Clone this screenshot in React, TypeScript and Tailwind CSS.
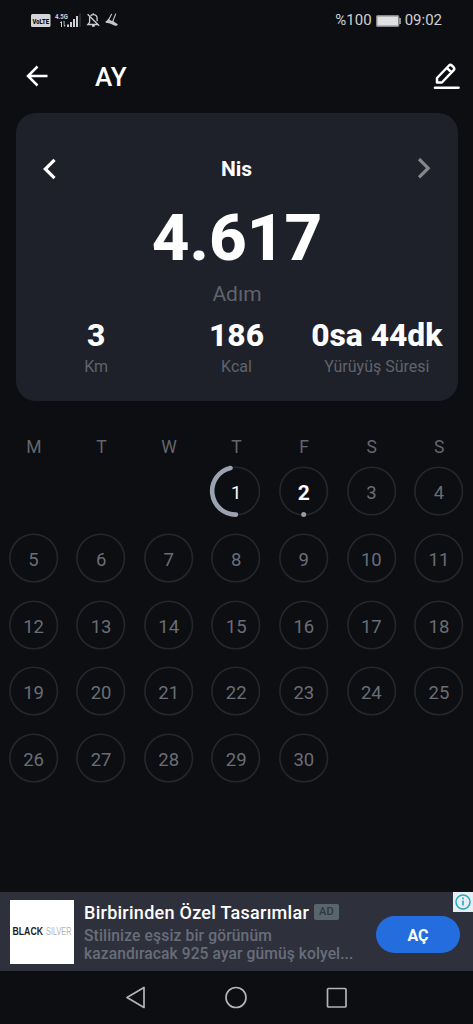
import React from "react";

const days = ["M", "T", "W", "T", "F", "S", "S"];

function StatusBar() {
  return (
    <div className="flex h-10 items-center justify-between pr-[31px] pl-[31px] text-[#d0d1d4]">
      <div className="flex items-center">
        <svg width="20" height="13" viewBox="0 0 20 13" overflow="visible">
          <rect width="19.500" height="13" rx="1.500" fill="#d4d5d8" />
          <text x="1.500" y="9.500" fontSize="8" fontWeight="900" fill="#0d0e12" textLength="16.500" lengthAdjust="spacingAndGlyphs">
            VoLTE
          </text>
        </svg>
        <svg className="ml-[4px]" width="27" height="16" viewBox="0 0 27 16" fill="#cdced2" overflow="visible">
          <text x="0" y="7" fontSize="7.500" fontWeight="700" textLength="13" lengthAdjust="spacingAndGlyphs">
            4.5G
          </text>
          <path d="M5 10.500 7 9v6H6v-4H5zM8.500 9h1v4h1.200L9 15zM12 12.500h2V15h-2zM15 10h2v5h-2zM18 7h2v8h-2zM21 4h2v11h-2z" />
          <path d="M24.500 1.500h1V15h-1z" fill="#4a4b50" />
        </svg>
        <svg className="ml-[4px]" width="15" height="16" viewBox="0 0 15 16" fill="none" stroke="#cdced2" strokeWidth="1.300">
          <path d="M4.600 3.800C5.300 3 6.200 2.600 7.300 2.600c2.300 0 3.800 1.700 3.800 4v2.600M3.600 5.300v5L1.800 12.500h9.500M7.300 2.600V1.300M6 14h2.800M1.600 2.200l11.600 11.600" />
        </svg>
        <svg className="ml-[4px]" width="15" height="16" viewBox="0 0 15 16" fill="#c5c6ca">
          <path d="M.500 9.300C2 9 2.700 8 3.200 6.500L5.700 8.400 8 9 12.800 12.300c-.200 1.500-1.900 1.900-3.400 1.300L5 11.500.800 10.700z" />
          <path d="M3.500 8 6.700 2M7.600 9.800 10.800 1.600" stroke="#c5c6ca" strokeWidth="1.100" />
        </svg>
      </div>
      <div className="flex items-center pt-px text-[15px]">
        <span>%100</span>
        <svg className="mr-[4px] ml-[4px]" width="25" height="12" viewBox="0 0 25 12">
          <rect x=".7" y=".7" width="22" height="10.600" rx="1" fill="#e0e0e0" stroke="#85868a" strokeWidth="1.400" />
          <path d="M24 3v6" stroke="#b5b6ba" strokeWidth="1.500" />
        </svg>
        <span>09:02</span>
      </div>
    </div>
  );
}

function Header() {
  return (
    <header className="flex h-[73px] items-center pr-[12px] pl-[26px] text-white">
      <svg className="mb-[2px]" width="22" height="22" viewBox="0 0 22 22" fill="none" stroke="currentColor" strokeWidth="2.500">
        <path d="M21.500 11H2M11.500 1.500 2 11l9.500 9.500" />
      </svg>
      <h1 className="ml-[47px] text-[26px] leading-none font-medium">AY</h1>
      <svg className="ml-auto" width="28" height="28" viewBox="0 0 28 28" fill="none" stroke="currentColor" strokeWidth="2.500" strokeLinejoin="round">
        <path d="M4 19.500V15L16 2.500Q17.400 1.300 18.900 2.500L20.700 4.300Q21.900 5.800 20.700 7.200L8.900 19.500zM13.900 4.900l4.500 4.500" />
        <path d="M2 24.800h23.500" strokeWidth="2.600" strokeLinecap="round" />
      </svg>
    </header>
  );
}

function Stat({ value, label }: { value: string; label: string }) {
  return (
    <div className="flex flex-col items-center whitespace-nowrap">
      <div className="pt-px text-[31.8px] leading-[38px] font-extrabold text-white">{value}</div>
      <div className="mt-[3px] text-[16px] leading-[20px] text-[#60636c]">{label}</div>
    </div>
  );
}

function SummaryCard() {
  return (
    <section className="mr-[15px] ml-4 h-[288px] rounded-[20px] bg-[#1e2129]">
      <div className="flex h-[92px] items-center justify-between pt-[19px] pr-[27px] pl-[26px]">
        <svg width="14" height="22" viewBox="0 0 14 22" fill="none" stroke="#fff" strokeWidth="3.200">
          <path d="M12.500 1.800 3.300 11 12.500 20.200" />
        </svg>
        <h2 className="pt-[2px] text-[21px] leading-none font-bold text-white">Nis</h2>
        <svg width="14" height="22" viewBox="0 0 14 22" fill="none" stroke="#85878d" strokeWidth="3.200">
          <path d="M2 1 11.200 10.200 2 19.400" />
        </svg>
      </div>
      <div className="text-center text-[65.5px] leading-[66px] font-extrabold text-white">4.617</div>
      <div className="mt-[10px] text-center text-[21px] leading-[26px] text-[#60636c]">Adım</div>
      <div className="mt-[8px] ml-[10px] grid w-[421px] grid-cols-3">
        <Stat value="3" label="Km" />
        <Stat value="186" label="Kcal" />
        <Stat value="0sa 44dk" label="Yürüyüş Süresi" />
      </div>
    </section>
  );
}

function Day({ n }: { n: number }) {
  return (
    <div className="grid h-[66.8px] place-items-start justify-center">
      <svg className="col-start-1 row-start-1" width="54" height="54" viewBox="0 0 54 54" fill="none">
        <circle cx="26.700" cy="27" r="23.800" stroke="#26272c" strokeWidth="1.600" />
        {n === 1 && (
          <path d="M27 50.600A23.600 23.600 0 0 1 21.500 4" stroke="#9ca3b0" strokeWidth="4.600" strokeLinecap="round" />
        )}
        {n === 2 && <circle cx="26.700" cy="50.600" r="2.500" fill="#9a9ca2" />}
      </svg>
      <div
        className={
          "col-start-1 row-start-1 w-[54px] pt-[2px] pr-[0.5px] text-center leading-[54px] " +
          (n === 2 ? "text-[21px] font-bold text-white" : n === 1 ? "text-[18.5px] text-white" : "text-[18.5px] text-[#6a6d75]")
        }
      >
        {n}
      </div>
    </div>
  );
}

function Calendar() {
  return (
    <section className="pt-[34px]">
      <div className="grid h-[29px] grid-cols-7 text-center text-[17.5px] leading-[25px] text-[#64666d]">
        {days.map((d, i) => (
          <span key={i}>{d}</span>
        ))}
      </div>
      <div className="grid grid-cols-7">
        <div className="col-span-3" />
        {Array.from({ length: 30 }, (_, i) => (
          <Day key={i} n={i + 1} />
        ))}
      </div>
    </section>
  );
}

function AdBanner() {
  return (
    <aside className="relative mt-auto flex h-[79px] shrink-0 items-center bg-[#2e313c] pr-[13px] pl-[10px]">
      <div className="flex h-[64px] w-[64px] shrink-0 items-center justify-center bg-white font-['Liberation_Sans',sans-serif]">
        <svg width="64" height="20" viewBox="0 0 64 20" overflow="visible">
          <text x="2.500" y="13" fontSize="10" fontWeight="700" fill="#1c1c1c" textLength="30.500" lengthAdjust="spacingAndGlyphs">
            BLACK
          </text>
          <text x="36" y="13" fontSize="10" fill="#b4b4b4" textLength="25.500" lengthAdjust="spacingAndGlyphs">
            SILVER
          </text>
        </svg>
      </div>
      <div className="ml-[10px] whitespace-nowrap">
        <div className="flex items-center text-[18px] leading-[23px] font-medium tracking-[0.27px] text-white">
          Birbirinden Özel Tasarımlar
          <span className="ml-[5px] -mt-px flex h-[16px] w-[25px] items-center justify-center rounded-[2px] bg-[#59646b] text-[11px] font-medium tracking-[0.3px] text-[#2e3940]">
            AD
          </span>
        </div>
        <div className="pt-[3px] text-[15.6px] leading-[18px] font-medium tracking-[0.09px] text-[#686d79]">
          <div className="tracking-[0.14px]">Stilinize eşsiz bir görünüm</div>
          <div>kazandıracak 925 ayar gümüş kolyel...</div>
        </div>
      </div>
      <button className="mt-[6px] ml-auto flex h-[37px] w-[84px] items-center justify-center rounded-full bg-[#246ddf] pt-[2px] text-[16px] font-bold text-white">
        AÇ
      </button>
      <svg className="absolute top-0 right-0" width="20" height="20" viewBox="0 0 20 20" fill="none">
        <path d="M0 0h20v20H0z" fill="#e6eef3" />
        <circle cx="10" cy="10" r="7" stroke="#25a9bd" strokeWidth="1.500" />
        <path d="M10 8.600v5M10 5.500v1.800" stroke="#25a9bd" strokeWidth="1.600" />
      </svg>
    </aside>
  );
}

function NavBar() {
  return (
    <nav className="flex h-[53px] shrink-0 items-center justify-center gap-[76.500px] pr-px">
      <svg width="24" height="24" viewBox="0 0 24 24" fill="none" stroke="#b3b4b8" strokeWidth="1.700" strokeLinejoin="round">
        <path d="M20 1.500v20L3 11.500z" />
      </svg>
      <svg width="24" height="24" viewBox="0 0 24 24" fill="none" stroke="#b3b4b8" strokeWidth="1.700">
        <circle cx="12" cy="11.500" r="10" />
      </svg>
      <svg width="24" height="24" viewBox="0 0 24 24" fill="none" stroke="#b3b4b8" strokeWidth="1.700">
        <rect x="2.500" y="2.500" width="18.500" height="18.500" rx="1" />
      </svg>
    </nav>
  );
}

export default function App() {
  return (
    <main className="flex h-[1024px] w-[473px] flex-col overflow-hidden bg-[#0c0e12] font-[Roboto,sans-serif]">
      <StatusBar />
      <Header />
      <SummaryCard />
      <Calendar />
      <AdBanner />
      <NavBar />
    </main>
  );
}
